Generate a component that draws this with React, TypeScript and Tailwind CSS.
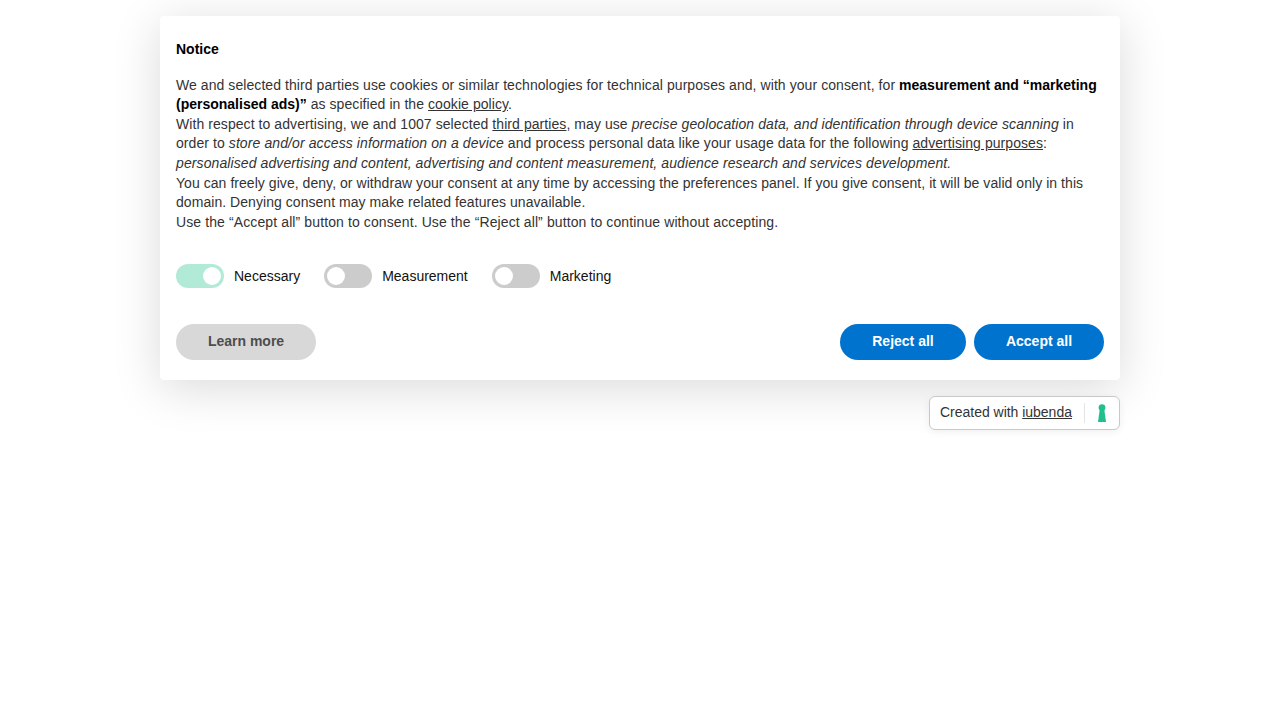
function Toggle({ on, label }: { on?: boolean; label: string }) {
  return (
    <div className="flex items-center gap-[10px]">
      {on ? (
        <div className="flex h-6 w-12 items-center justify-end rounded-full bg-[#b2ead8] pr-[3px]">
          <div className="h-[18px] w-[18px] rounded-full bg-white" />
        </div>
      ) : (
        <div className="flex h-6 w-12 items-center rounded-full bg-[#cccccc] pl-[3px]">
          <div className="h-[18px] w-[18px] rounded-full bg-white" />
        </div>
      )}
      <span className="text-[14px] leading-6 text-[#111111]">{label}</span>
    </div>
  )
}

export default function App() {
  return (
    <div className="h-[720px] w-[1280px] overflow-hidden bg-white font-['Liberation_Sans',Arial,sans-serif]">
      <div className="mx-auto w-[960px] pt-4">
        {/* banner */}
        <div className="flex h-[364px] flex-col rounded-[4px] bg-white px-4 shadow-[0_8px_48px_rgba(0,0,0,0.15)]">
          <h1 className="mt-6 text-[14px] font-bold leading-[19px] text-black">Notice</h1>
          <div className="mt-[16.6px] text-[14px] leading-[19.6px] tracking-[0.07px] text-[#333333]">
            <p>
              We and selected third parties use cookies or similar technologies for technical purposes and, with your
              consent, for{' '}
              <b className="tracking-normal text-black">measurement and “marketing (personalised ads)”</b> as specified
              in the <u>cookie policy</u>.
            </p>
            <p>
              With respect to advertising, we and 1007 selected <u>third parties</u>, may use{' '}
              <i className="tracking-[0.1px]">precise geolocation data, and identification through device scanning</i>{' '}
              in order to <i className="tracking-[0.1px]">store and/or access information on a device</i> and process
              personal data like your usage data for the following <u>advertising purposes</u>:{' '}
              <i className="tracking-[0.1px]">
                personalised advertising and content, advertising and content measurement, audience research and
                services development.
              </i>
            </p>
            <p className="tracking-[0.05px]">
              You can freely give, deny, or withdraw your consent at any time by accessing the preferences panel. If you
              give consent, it will be valid only in this domain. Denying consent may make related features unavailable.
            </p>
            <p className="tracking-[0.11px]">
              Use the “Accept all” button to consent. Use the “Reject all” button to continue without accepting.
            </p>
          </div>
          <div className="mt-[31.6px] flex gap-6">
            <Toggle on label="Necessary" />
            <Toggle label="Measurement" />
            <Toggle label="Marketing" />
          </div>
          <div className="mt-9 flex items-center justify-between">
            <button className="h-9 w-[140px] rounded-full bg-[#d8d8d8] text-[14px] font-bold text-[#4d4d4d]">
              Learn more
            </button>
            <div className="flex gap-2">
              <button className="h-9 w-[126px] rounded-full bg-[#0073ce] text-[14px] font-bold text-white">
                Reject all
              </button>
              <button className="h-9 w-[130px] rounded-full bg-[#0073ce] text-[14px] font-bold text-white">
                Accept all
              </button>
            </div>
          </div>
        </div>

        {/* iubenda badge */}
        <div className="mt-4 flex justify-end">
          <div className="flex h-[34px] w-[191px] items-center rounded-[6px] border border-[#c8c8c8] bg-white pl-[10px] shadow-[0_2px_8px_rgba(0,0,0,0.06)]">
            <span className="pb-[2px] text-[14px] tracking-[-0.02px] text-[#333333]">
              Created with <u>iubenda</u>
            </span>
            <div className="ml-3 h-5 w-px bg-[#e4e4e4]" />
            <svg className="ml-3" width="10" height="18" viewBox="0 0 10 18">
              <circle cx="5" cy="3.6" r="3.4" fill="#1fc08e" />
              <path d="M2.8 5h4.4L9 18H1z" fill="#1fc08e" />
            </svg>
          </div>
        </div>
      </div>
    </div>
  )
}
